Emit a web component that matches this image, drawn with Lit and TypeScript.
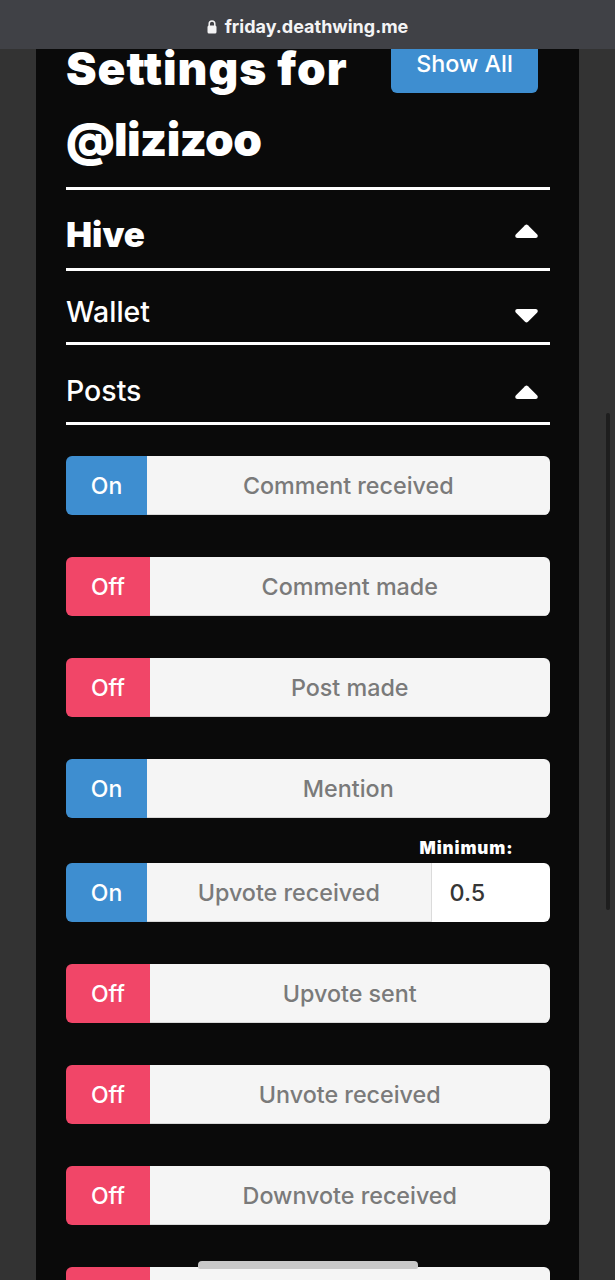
import { LitElement, html, css, svg } from "lit";
import { customElement } from "lit/decorators.js";

const caret = (dir: "up" | "down") => html`<svg class="caret" viewBox="0 0 23 14" aria-hidden="true">
  ${dir === "up"
    ? svg`<path d="M10 1.2 1 10.3C-.4 11.8.3 14 2.4 14h18.2c2.1 0 2.8-2.2 1.4-3.7L13 1.2c-.9-.9-2.1-.9-3 0z" fill="#fff"/>`
    : svg`<path d="M10 12.8 1 3.7C-.4 2.2.3 0 2.4 0h18.2c2.1 0 2.8 2.2 1.4 3.7L13 12.8c-.9.9-2.1.9-3 0z" fill="#fff"/>`}
</svg>`;

type Row = { on: boolean; label: string; min?: string; blank?: boolean };
const rows: Row[] = [
  { on: true, label: "Comment received" },
  { on: false, label: "Comment made" },
  { on: false, label: "Post made" },
  { on: true, label: "Mention" },
  { on: true, label: "Upvote received", min: "0.5" },
  { on: false, label: "Upvote sent" },
  { on: false, label: "Unvote received" },
  { on: false, label: "Downvote received" },
  { on: false, label: "", blank: true },
];

@customElement("app-root")
export class AppRoot extends LitElement {
  static styles = css`
    :host {
      display: block;
      position: relative;
      height: 1280px;
      overflow: hidden;
      background: #333333;
      font-family: Inter, "Liberation Sans", sans-serif;
    }
    .urlbar {
      position: absolute;
      top: 0;
      left: 0;
      right: 0;
      height: 49px;
      z-index: 2;
      background: #404146;
      display: flex;
      align-items: center;
      justify-content: center;
      gap: 8px;
      color: #f4f4f5;
      font-size: 18px;
      font-weight: 700;
      padding-top: 4px;
      box-sizing: border-box;
    }
    .lock {
      width: 10px;
      height: 14px;
    }
    .scrollbar {
      position: absolute;
      left: 606px;
      top: 413px;
      width: 4px;
      height: 497px;
      border-radius: 2px;
      background: #1e1e1e;
    }
    .home {
      position: absolute;
      left: 198px;
      top: 1261px;
      width: 220px;
      height: 8px;
      border-radius: 4px 4px 2px 2px;
      background: #c8c8c8;
      z-index: 2;
    }
    .card {
      margin: 0 36px;
      height: 100%;
      background: #0a0a0a;
      padding: 34px 29.5px 0 30px;
      box-sizing: border-box;
    }
    .head {
      display: flex;
      align-items: flex-start;
      justify-content: space-between;
      padding-bottom: 11px;
      border-bottom: 3px solid #fff;
    }
    h1 {
      margin: -1px 0 1px;
      width: 325px;
      color: #fff;
      font-size: 46px;
      line-height: 71px;
      font-weight: 900;
    }
    .line1 {
      display: block;
      letter-spacing: 0.95px;
    }
    .line2 {
      display: block;
      letter-spacing: -0.6px;
    }
    .show {
      width: 147px;
      height: 59px;
      margin-right: 11.5px;
      border: 0;
      border-radius: 6px;
      background: #3e8ed0;
      color: #fff;
      font: 500 23.3px Inter, sans-serif;
    }
    .section {
      display: flex;
      align-items: center;
      justify-content: space-between;
      color: #fff;
      border-bottom: 3px solid #fff;
      padding-right: 11.5px;
      box-sizing: border-box;
      font-size: 28.5px;
      font-weight: 500;
    }
    .hive {
      height: 81px;
      padding-top: 10px;
      font-size: 34.8px;
      font-weight: 900;
    }
    .wallet {
      height: 74px;
      padding-top: 9px;
    }
    .posts {
      height: 80px;
      padding-top: 14px;
      margin-bottom: 31px;
    }
    .caret {
      width: 23px;
      height: 14px;
      display: block;
    }
    .hive .caret {
      margin-top: -7px;
    }
    .wallet .caret {
      margin-top: 10px;
    }
    .posts .caret {
      margin-top: 2px;
    }
    .rows {
      display: flex;
      flex-direction: column;
      gap: 42px;
    }
    .caption {
      margin-top: -22px;
      height: 25px;
      color: #fff;
      font-size: 17px;
      line-height: 20px;
      font-weight: 900;
      letter-spacing: 0.9px;
      text-align: right;
      padding-right: 36px;
      margin-bottom: -42px;
    }
    .row {
      display: flex;
      height: 59px;
      flex: none;
      border-radius: 6px;
      overflow: hidden;
      font-size: 23.3px;
      font-weight: 500;
    }
    .state {
      display: flex;
      align-items: center;
      justify-content: center;
      flex: none;
      color: #fff;
      font-size: 23px;
    }
    .state.on {
      width: 81px;
      background: #3e8ed0;
    }
    .state.off {
      width: 84px;
      background: #f14668;
    }
    .label {
      flex: 1;
      display: flex;
      align-items: center;
      justify-content: center;
      background: #f5f5f5;
      color: #7a7a7a;
      box-shadow: inset 0 -1px 0 #d8d8d8;
    }
    .value {
      width: 119px;
      flex: none;
      display: flex;
      align-items: center;
      box-sizing: border-box;
      padding-left: 18px;
      background: #fff;
      border-left: 1px solid #dbdbdb;
      color: #363636;
    }
  `;

  render() {
    return html`
      <div class="urlbar">
        <svg class="lock" viewBox="0 0 10 14" aria-hidden="true">
          <path d="M2.2 6V3.8a2.8 2.8 0 0 1 5.6 0V6" fill="none" stroke="#f4f4f5" stroke-width="1.5"/>
          <rect x="0.5" y="5.6" width="9" height="8" rx="1.5" fill="#f4f4f5"/>
        </svg>
        <span>friday.deathwing.me</span>
      </div>
      <div class="card">
        <div class="head">
          <h1><span class="line1">Settings for</span><span class="line2">@lizizoo</span></h1>
          <button class="show">Show All</button>
        </div>
        <div class="section hive"><span>Hive</span>${caret("up")}</div>
        <div class="section wallet"><span>Wallet</span>${caret("down")}</div>
        <div class="section posts"><span>Posts</span>${caret("up")}</div>
        <div class="rows">
          ${rows.map(
            (r) => html`
              ${r.min ? html`<div class="caption">Minimum:</div>` : ""}
              <div class="row">
                <div class="state ${r.on ? "on" : "off"}">${r.blank ? "" : r.on ? "On" : "Off"}</div>
                <div class="label">${r.label}</div>
                ${r.min ? html`<div class="value">${r.min}</div>` : ""}
              </div>
            `
          )}
        </div>
      </div>
      <div class="scrollbar"></div>
      <div class="home"></div>
    `;
  }
}
